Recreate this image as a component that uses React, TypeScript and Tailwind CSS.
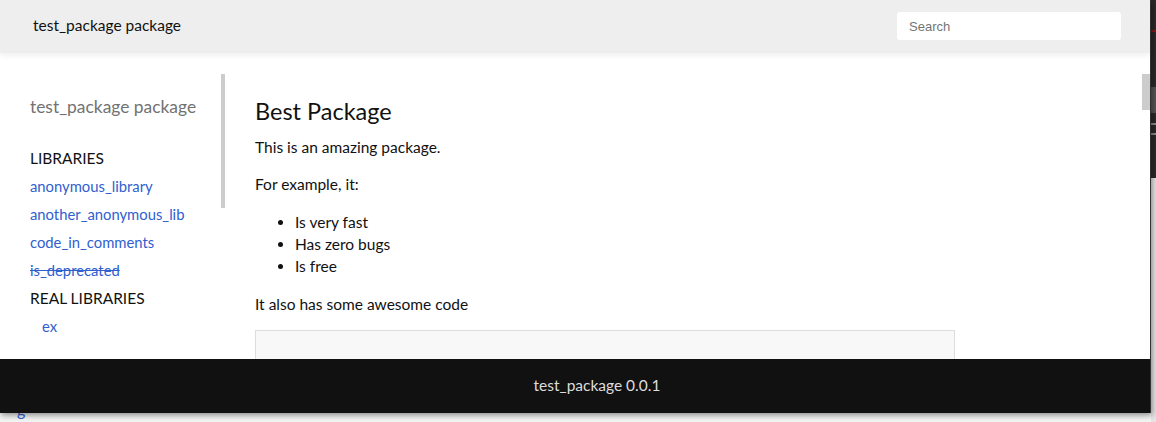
import React from 'react';

const font = { fontFamily: 'Lato, "Noto Sans", sans-serif' };

const libs = [
  { name: 'anonymous_library' },
  { name: 'another_anonymous_lib' },
  { name: 'code_in_comments' },
  { name: 'is_deprecated', deprecated: true },
];

const App: React.FC = () => {
  return (
    <div className="relative w-[1156px] h-[422px] overflow-hidden bg-[#f4f4f4]" style={font}>
      {/* what lies behind the window */}
      <div className="absolute left-[17px] top-[402px] text-[16px] text-[#3060d0] leading-none">g</div>
      <div className="absolute right-0 top-0 w-[5px] h-[178px] bg-[#2a2a2a]">
        <div className="mt-[30px] h-[2px] bg-[#8b1a1a]" />
        <div className="mt-[55px] h-[26px] bg-[#555]" />
        <div className="mt-[10px] h-[2px] bg-[#888]" />
        <div className="mt-[8px] h-[2px] bg-[#888]" />
      </div>
      <div className="absolute right-0 top-[178px] w-[5px] h-[244px] bg-[#e4e4e4]" />

      {/* window */}
      <div className="relative w-[1151px] h-[413px] flex flex-col bg-white shadow-[1px_2px_6px_rgba(0,0,0,0.45)] border-r border-[#333]">
        <header className="h-[53px] shrink-0 bg-[#eeeeee] flex items-center justify-between pl-[33px] pr-[29px] pb-[1px] shadow-[0_3px_5px_rgba(0,0,0,0.06)] relative z-10">
          <span className="text-[15.5px] text-[#111]">test_package package</span>
          <input
            placeholder="Search"
            className="w-[224px] h-[28px] rounded-[3px] bg-white px-[12px] text-[13px] text-[#333] placeholder:text-[#757575] outline-none"
            style={{ fontFamily: '"Liberation Sans", Arial, sans-serif' }}
          />
        </header>

        <main className="relative flex-1 flex overflow-hidden">
          {/* sidebar */}
          <nav className="relative w-[225px] shrink-0 pl-[30px] pt-[42px]">
            <div className="text-[17.4px] text-[#727272] leading-[24px]">test_package package</div>
            <div className="mt-[25px] text-[15.5px] text-[#111] uppercase leading-[28px]">Libraries</div>
            <ul className="text-[14.8px] leading-[28px]">
              {libs.map((l) => (
                <li key={l.name}>
                  <a className={`text-[#3060d0] ${l.deprecated ? 'line-through' : ''}`}>{l.name}</a>
                </li>
              ))}
              <li className="text-[15.5px] text-[#111] uppercase">Real Libraries</li>
              <li className="pl-[12px]">
                <a className="text-[#3060d0]">ex</a>
              </li>
            </ul>
            <div className="absolute right-0 top-[21px] w-[4px] h-[134px] bg-[#cccccc]" />
          </nav>

          {/* content */}
          <section className="flex-1 pl-[30px] pt-[44px] text-[15.5px] text-[#111]">
            <h1 className="text-[23.5px] leading-[28px]">Best Package</h1>
            <p className="mt-[10px] leading-[24px]">This is an amazing package.</p>
            <p className="mt-[13px] leading-[24px]">For example, it:</p>
            <ul className="mt-[15px] list-disc pl-[40px] leading-[22px]">
              <li>Is very fast</li>
              <li>Has zero bugs</li>
              <li>Is free</li>
            </ul>
            <p className="mt-[15px] leading-[24px]">It also has some awesome code</p>
            <div className="mt-[14px] w-[700px] h-[80px] bg-[#f8f8f8] border border-[#dddddd]" />
          </section>

          <div className="absolute right-0 top-[21px] w-[8px] h-[36px] bg-[#cccccc]" />
        </main>

        <footer className="h-[54px] shrink-0 bg-[#111111] flex items-center justify-center pl-[44px] text-[15.5px] text-[#dddddd]">
          test_package 0.0.1
        </footer>
      </div>
    </div>
  );
};

export default App;
